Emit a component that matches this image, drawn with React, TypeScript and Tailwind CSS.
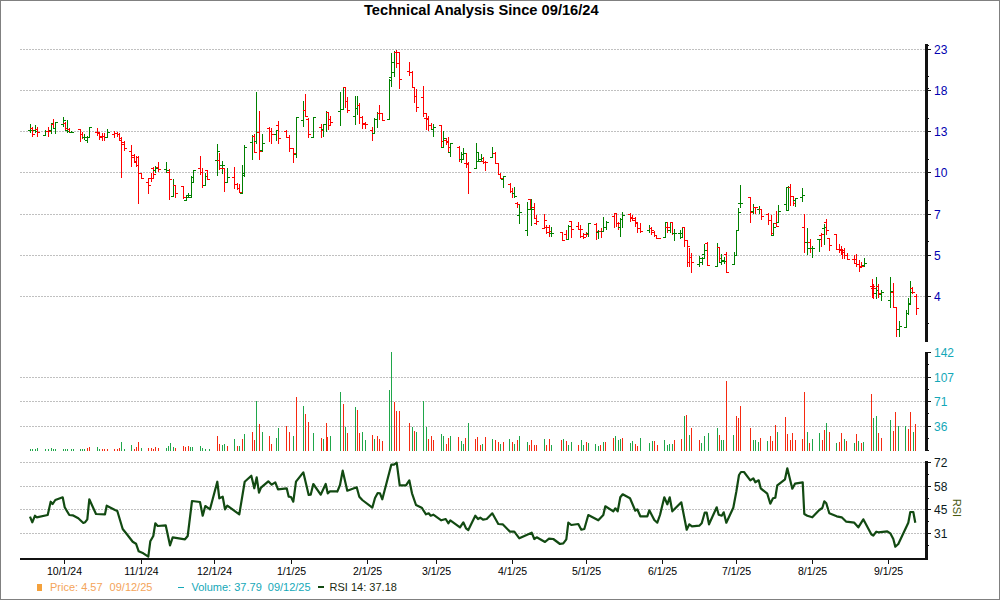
// Bar, volume and RSI values were read off the chart, in 3x crop coordinates
const OHLC: [number, number, string][] = [
  [0, 0, `g 91 373 398 391 391;r 97 380 410 385 403;g 106 376 400 391 392;r 110 382 410 387 397;g 136 390 408 404 392;r 143 382 410 392 392;g 152 370 403 390 370;r 158 358 388 372 385;g 166 365 403 385 367;g 188 350 380 373 360;r 195 365 392 370 385;g 202 360 398 390 392;r 206 385 400 388 397;g 213 393 400 397 397;r 239 388 425 388 402;r 246 395 418 402 412;g 253 403 420 412 412;g 262 407 430 420 410;g 268 382 412 410 382;r 290 385 408 396 398;r 298 396 420 396 410;r 305 398 422 408 408;r 312 400 422 408 412;g 320 388 412 410 396;r 343 392 415 402 400;r 350 395 412 400 403;r 357 400 422 402 420;r 364 412 533 415 425;r 371 422 452 432 445;r 394 436 500 453 465;r 401 462 490 470 485;r 409 468 500 484 470;r 415 468 611 495 520;r 424 518 538 518 533;r 445 535 582 545 555;r 452 518 545 533 533;r 459 500 535 503 522;g 466 497 518 510 503;r 475 487 515 500 508;g 497 487 518 508 510;r 508 508 600 515 538;g 520 538 592 587 555;r 526 555 595 555 580;r 548 558 597 558 590;g 558 585 602 600 585;g 564 580 592 590 585;g 572 527 590 590 532;g 578 510 545 545 510;r 601 468 525 505 515;r 607 505 563 515 555;g 615 518 555 555 528;r 622 510 540 510 538;g 652 433 528 480 453;r 658 460 510 480 505;g 666 483 523 495 495;r 673 505 575 505 547;g 681 505 547 545 532;r 703 502 567 530 552;r 710 550 570 552 565;r 717 552 580 565 575;g 725 495 580 578 518;g 733 435 530 525 441;g 755 405 480 425 408;r 763 403 460 408 455;g 769 277 432 422 397;r 777 332 480 397 453;g 785 403 455 450 430;r 806 382 425 385 392;r 813 385 432 392 402;g 828 390 422 402 390;r 835 362 433 375 415;r 859 390 415 392 410;r 866 405 455 410 445;r 880 445 488 445 460;g 888 350 473 462 350;g 910 302 382 360 330;r 916 283 347 330 347;r 925 355 413 358 403;g 940 352 413 410 352;r 962 372 413 380 390;g 969 372 410 388 372;g 977 332 395 372 337;r 985 337 390 337 375;r 991 347 377 358 367`],
  [330, 30, `g 31 187 287 243 238;g 38 170 240 238 172;r 45 172 233 172 214;r 52 200 250 214 240;g 76 197 285 258 235;g 82 197 255 235 225;r 88 220 283 225 262;r 97 258 297 262 283;r 104 275 297 280 283;r 127 292 332 300 310;g 133 265 312 310 268;g 142 245 293 268 248;r 148 225 270 248 250;r 157 248 272 250 271;g 178 148 268 266 150;g 184 70 172 140 97;g 192 62 140 125 65;r 199 60 115 65 100;r 207 67 177 67 148;r 238 97 137 122 125;r 245 123 172 125 172;r 252 172 218 172 197;r 259 178 245 197 232;r 280 168 260 202 250;r 287 250 300 265 265;r 295 258 302 268 285;r 303 280 300 285 298;g 310 283 320 297 292;r 334 285 352 285 332;g 340 302 352 350 323;r 347 323 345 330 332;r 355 322 370 335 352;g 361 340 382 365 340;r 386 348 395 352 388;g 392 365 398 388 373;g 400 355 390 388 370;r 407 370 413 400 400;r 415 397 491 402 425;g 437 340 413 413 365;g 444 365 397 392 388;g 452 372 397 392 385;r 459 380 403 393 397;r 466 392 423 397 397;g 487 352 382 382 368;r 495 365 403 368 400;r 503 398 435 400 432;r 511 430 447 432 445;g 518 438 475 447 438;r 539 460 490 462 483;r 546 475 505 483 490;g 553 472 505 490 497;r 560 515 535 520 522;g 568 525 582 555 547;g 592 517 617 600 538;r 599 507 540 508 538;g 604 508 587 538 538;r 611 520 565 530 565;r 618 555 585 578 573;r 642 553 597 595 570;r 649 585 612 590 607;r 657 585 622 590 602;g 664 590 620 610 610;r 695 605 630 605 630;r 708 600 630 613 628;g 715 585 630 628 587;r 722 572 625 572 598;r 744 575 600 587 598;r 751 585 625 598 598;r 760 610 628 618 622;r 767 605 622 612 612;g 775 578 622 610 580;r 797 580 630 582 602;g 805 600 628 607 602;r 812 595 625 602 602;g 820 562 605 602 590;g 827 573 600 590 575;r 851 548 595 558 550;r 857 550 592 550 580;r 863 575 600 578 578;g 871 563 622 590 567;g 877 545 595 567 555;r 901 548 575 552 560;r 907 555 572 565 565;r 914 562 590 570 575;r 921 575 610 580 595;r 929 578 610 595 604;g 956 585 610 600 593;r 964 590 615 593 600;r 971 603 622 607 615;r 978 615 628 615 623;r 985 623 628 623 625`],
  [660, 150, `g 14 217 262 260 217;r 22 217 250 232 232;g 29 217 248 240 217;r 36 217 255 217 250;g 42 237 272 250 250;g 59 240 267 250 248;g 67 230 265 262 230;r 72 230 290 230 270;r 80 270 350 270 287;r 88 295 350 337 322;r 94 310 368 322 337;g 118 317 350 343 325;g 125 322 345 335 325;g 133 283 325 313 300;r 141 275 348 280 345;g 170 280 350 347 290;r 176 290 338 290 325;g 184 312 345 335 330;g 191 320 343 332 332;r 198 305 368 313 367;g 222 305 345 342 315;g 229 240 318 315 240;g 235 173 242 240 187;g 241 105 173 160 160;r 270 142 220 142 185;g 280 163 193 183 172;r 286 170 192 172 172;g 296 168 193 178 178;r 303 178 210 178 198;r 325 190 225 192 210;r 332 195 255 210 250;g 339 220 257 255 232;r 347 182 228 218 228;g 353 165 218 215 183;g 378 110 180 162 110;g 384 107 182 180 110;r 391 103 168 110 137;r 398 137 168 137 160;g 406 143 172 150 143;g 427 115 155 140 135;r 433 193 308 230 277;g 442 235 315 277 293;r 449 268 308 277 295;g 457 287 323 293 295;g 478 267 305 268 267;r 484 250 290 254 252;g 491 222 285 235 230;r 498 208 255 215 240;r 507 265 303 265 285;r 527 253 300 253 297;r 536 283 308 298 298;r 542 287 315 298 300;r 546 298 328 300 305;r 553 295 328 305 315;r 560 310 328 315 328;r 582 315 340 327 327;r 589 313 350 340 343;r 597 330 365 343 350;r 604 335 355 347 347;g 611 325 350 345 338;r 635 388 443 408 408;r 640 403 447 415 415;g 649 380 448 430 420;r 654 403 443 407 430;g 663 420 452 432 425;g 691 382 475 450 422;r 699 400 475 425 472;r 707 470 560 472 537;g 717 513 562 537 527;g 737 480 532 532 490;g 743 445 495 490 460;g 751 392 465 462 427;r 757 412 432 415 425;r 767 432 495 438 475`],
];

const VOLUME: [number, number, string][] = [
  [0, 400, `g 91 147;g 97 147;g 106 146;g 112 143;g 136 147;g 143 146;g 152 144;g 158 146;g 166 146;g 188 146;g 195 148;g 202 147;g 213 147;g 218 148;g 239 147;g 246 148;g 253 146;r 262 143;r 268 141;g 290 142;g 298 147;r 305 147;r 312 147;r 320 147;r 343 147;r 350 147;r 357 144;g 364 126;g 371 148;g 394 136;r 401 147;r 407 140;r 415 127;g 424 143;r 445 144;r 452 143;r 459 147;r 466 142;r 475 143;g 497 143;g 504 137;g 511 129;g 518 141;r 526 144;r 548 139;r 556 140;r 563 138;g 570 141;g 577 142;g 601 139;g 607 143;g 615 146;g 628 146;r 652 108;r 658 133;g 666 135;g 673 132;r 681 138;g 703 118;r 710 139;g 717 138;r 725 118;g 733 103;r 755 97;r 763 120;g 769 3;r 777 73;g 785 97;r 806 108;r 813 132;g 828 115;g 835 85;r 859 79;r 866 97;g 880 108;r 888 -9;g 910 18;r 916 43;r 925 66;g 940 100;r 962 115;g 969 118;r 977 70;r 982 112;g 991 108`],
  [330, 340, `g 31 157;r 38 192;g 45 262;r 52 280;g 76 202;r 82 211;r 88 280;g 97 277;g 104 300;r 127 285;g 133 298;r 142 288;r 148 297;r 157 303;g 178 150;g 184 37;r 192 187;r 199 214;r 207 214;r 238 249;g 245 262;r 252 273;g 259 276;g 280 184;g 289 262;r 295 298;r 304 289;r 310 300;g 334 282;g 340 289;r 347 312;r 355 295;g 361 288;r 385 292;g 392 304;g 400 312;r 406 295;g 415 249;r 436 298;r 442 292;r 451 316;g 457 313;r 466 292;g 487 298;r 496 301;r 503 306;g 511 313;r 518 306;g 538 298;r 547 306;g 553 313;r 562 301;g 568 289;g 592 306;r 598 316;r 604 301;r 613 316;r 619 316;g 643 298;r 649 316;r 658 298;g 664 316;r 693 301;g 700 298;r 709 304;g 715 316;g 724 306;r 745 316;g 754 301;g 760 316;r 769 306;g 775 310;g 796 313;g 805 318;r 811 316;g 820 306;r 826 306;r 850 295;g 856 289;g 865 301;g 871 298;r 877 295;g 901 310;g 907 304;r 916 313;r 922 318;g 931 295;g 958 310;g 967 304;r 973 304;r 982 316;g 1003 301;r 1012 316`],
  [660, 340, `g 22 316;g 28 313;g 37 313;r 43 301;r 64 298;g 73 228;r 79 225;g 88 286;r 94 265;r 118 301;g 124 310;g 133 289;g 145 280;g 170 265;r 176 286;g 184 301;g 190 301;r 199 124;g 220 286;r 229 228;r 235 234;r 241 199;r 271 265;g 280 301;g 286 301;g 295 306;r 301 295;g 322 304;r 331 289;r 337 304;r 346 255;g 352 277;r 376 231;r 382 283;r 391 301;r 397 280;r 406 301;r 427 298;r 433 157;g 442 277;r 448 310;g 457 298;g 478 280;r 487 301;r 493 271;g 499 249;r 508 277;g 529 310;r 538 306;r 544 280;g 553 298;r 559 304;g 583 310;r 589 283;g 595 304;r 604 310;g 610 306;r 634 163;g 640 234;g 649 228;r 655 280;r 664 295;g 691 240;r 700 274;r 706 216;g 715 259;g 736 259;r 745 268;r 751 216;g 760 277;r 766 252`],
];

const RSI: [number, number, number[][]][] = [
  [0, 400, [[90,350],[97,367],[105,347],[110,352],[143,345],[152,305],[158,312],[166,300],[188,292],[194,322],[208,345],[218,346],[235,355],[250,369],[255,367],[262,358],[268,298],[288,342],[315,343],[320,317],[345,330],[352,333],[368,387],[380,402],[398,425],[408,431],[416,454],[430,460],[445,470],[451,424],[460,408],[466,370],[473,378],[497,376],[510,436],[518,412],[555,418],[563,408],[576,303],[600,306],[608,347],[616,318],[626,325],[630,328],[652,245],[658,295],[668,290],[675,328],[682,317],[718,343],[734,245],[754,227],[763,265],[770,232],[777,278],[783,263],[805,244],[815,254],[826,247],[834,268],[860,265],[866,290],[873,291],[880,305],[888,245],[910,217],[926,285],[932,284],[940,252],[962,284],[977,252],[983,280],[990,274],[1012,274]]],
  [330, 340, [[22,455],[30,435],[38,392],[52,452],[80,442],[88,470],[97,480],[127,503],[135,474],[143,459],[150,460],[157,478],[184,374],[192,374],[200,368],[209,436],[228,436],[238,421],[246,460],[258,495],[275,503],[288,523],[296,520],[302,527],[310,524],[334,541],[347,537],[355,550],[361,541],[390,562],[400,547],[408,565],[415,570],[436,527],[444,537],[451,533],[459,539],[470,537],[487,520],[505,552],[518,553],[540,575],[553,575],[568,595],[605,578],[613,597],[620,592],[645,606],[657,596],[670,597],[690,612],[700,610],[709,598],[715,548],[724,555],[745,552],[754,569],[763,567],[775,525],[805,541],[820,525],[826,499],[850,514],[856,505],[863,514],[871,472],[878,463],[900,475],[916,512],[922,508],[931,529],[952,529],[958,511],[973,540],[982,548]]],
  [660, 340, [[0,525],[13,472],[22,493],[29,472],[37,514],[64,487],[80,569],[88,553],[96,559],[118,557],[125,550],[134,518],[140,518],[147,553],[170,502],[176,524],[185,527],[191,517],[199,548],[220,503],[229,455],[237,405],[243,396],[252,396],[271,421],[280,415],[286,427],[296,421],[302,445],[322,461],[331,491],[339,475],[346,473],[352,436],[375,418],[382,385],[397,446],[405,431],[428,427],[433,522],[442,527],[457,532],[478,510],[487,504],[493,484],[499,490],[508,520],[530,529],[545,532],[559,545],[583,548],[595,562],[610,538],[634,583],[640,587],[649,575],[655,577],[682,574],[691,580],[700,597],[706,620],[715,612],[745,548],[751,516],[760,516],[766,548]]],
];

const px = (n: number) => Math.round(n) + 0.5;

const bars = OHLC.flatMap(([ox, oy, raw]) =>
  raw.split(";").map((row) => {
    const [c, ...n] = row.split(" ");
    const [x, top, bottom, open, close] = n.map(Number);
    return {
      green: c === "g",
      x: px(ox + x / 3),
      top: Math.round(oy + top / 3),
      bottom: Math.round(oy + bottom / 3),
      open: px(oy + open / 3),
      close: px(oy + close / 3),
    };
  }),
);

const volume = VOLUME.flatMap(([ox, oy, raw]) =>
  raw.split(";").map((row) => {
    const [c, x, top] = row.split(" ");
    return { green: c === "g", x: px(ox + Number(x) / 3), top: Math.round(oy + Number(top) / 3) };
  }),
);

const rsiPoints = RSI.flatMap(([ox, oy, pts]) =>
  pts.map(([x, y]) => `${(ox + x / 3).toFixed(1)},${(oy + y / 3).toFixed(1)}`),
).join(" ");

const priceLabels = [
  ["23", 49],
  ["18", 90],
  ["13", 131],
  ["10", 172],
  ["7", 214],
  ["5", 255],
  ["4", 296],
] as const;
const priceMinor = [45, 76, 88, 118, 159, 200, 241, 323];
const volumeLabels = [
  ["142", 352],
  ["107", 377],
  ["71", 401],
  ["36", 426],
] as const;
const volumeMinor = [364, 389, 413, 438, 450];
const rsiLabels = [
  ["72", 462],
  ["58", 486],
  ["45", 509],
  ["31", 533],
] as const;
const rsiMinor = [474, 498, 521, 545];
const months = [
  ["10/1/24", 64],
  ["11/1/24", 141],
  ["12/1/24", 214],
  ["1/1/25", 291],
  ["2/1/25", 367],
  ["3/1/25", 436],
  ["4/1/25", 512],
  ["5/1/25", 586],
  ["6/1/25", 662],
  ["7/1/25", 736],
  ["8/1/25", 812],
  ["9/1/25", 888],
] as const;

function Chart() {
  return (
    <svg width={998} height={560} viewBox="1 18 998 560" className="block">
      <g stroke="#c0c0c0" strokeDasharray="2 1" shapeRendering="crispEdges">
        {[...priceLabels, ...volumeLabels.slice(1), ...rsiLabels].map(([l, y]) => (
          <line key={`${l}-${y}`} x1={20} x2={925} y1={y + 0.5} y2={y + 0.5} />
        ))}
      </g>

      <g shapeRendering="crispEdges" fill="none">
        {bars.map((b, i) => (
          <path
            key={i}
            stroke={b.green ? "#008000" : "#ff0000"}
            d={`M${b.x} ${b.top}V${b.bottom}M${b.x - 2.5} ${b.open}H${b.x + 0.5}M${b.x - 0.5} ${b.close}H${b.x + 2.5}`}
          />
        ))}
        {volume.map((v, i) => (
          <line key={i} x1={v.x} x2={v.x} y1={v.top} y2={451} stroke={v.green ? "#1fa64a" : "#f52a10"} />
        ))}
      </g>

      <polyline points={rsiPoints} fill="none" stroke="#124a12" strokeWidth={2.2} strokeLinejoin="round" />

      <g stroke="#111" shapeRendering="crispEdges">
        <line x1={926} x2={926} y1={44} y2={342} strokeWidth={3} />
        <line x1={926} x2={926} y1={352} y2={451} strokeWidth={3} />
        <line x1={926} x2={926} y1={461} y2={560} strokeWidth={3} />
        <line x1={20} x2={927} y1={559} y2={559} strokeWidth={2} />
        {[...priceLabels, ...volumeLabels, ...rsiLabels].map(([l, y]) => (
          <line key={`${l}-${y}`} x1={927} x2={931} y1={y + 0.5} y2={y + 0.5} />
        ))}
        {[...priceMinor, ...volumeMinor, ...rsiMinor].map((y) => (
          <line key={y} x1={927} x2={929} y1={y + 0.5} y2={y + 0.5} />
        ))}
        {months.map(([l, x]) => (
          <line key={l} x1={x + 0.5} x2={x + 0.5} y1={560} y2={564} />
        ))}
      </g>

      <g fontSize={12} dominantBaseline="central">
        {priceLabels.map(([l, y]) => (
          <text key={l} x={934} y={y + 0.5} fill="#0000b0">
            {l}
          </text>
        ))}
        {volumeLabels.map(([l, y]) => (
          <text key={l} x={934} y={y + 0.5} fill="#14a8b8">
            {l}
          </text>
        ))}
        {rsiLabels.map(([l, y]) => (
          <text key={l} x={934} y={y + 0.5} fill="#0a1a20">
            {l}
          </text>
        ))}
      </g>
      <text
        x={957}
        y={508}
        fontSize={11}
        fill="#4a5a10"
        textAnchor="middle"
        dominantBaseline="central"
        transform="rotate(90 957 508)"
      >
        RSI
      </text>

      <g fontSize={10.5} textAnchor="middle" fill="#000" dominantBaseline="central">
        {months.map(([l, x]) => (
          <text key={l} x={x + 0.5} y={571}>
            {l}
          </text>
        ))}
      </g>
    </svg>
  );
}

function Legend() {
  return (
    <div className="flex h-[20px] items-center whitespace-pre pb-[2px] pl-[36px] text-[11px]">
      <span className="h-[7px] w-[5px] bg-[#f4a13c]" />
      <span className="ml-[8px] text-[#f4a45a]">Price: 4.57</span>
      <span className="ml-[7px] text-[#f4a45a]">09/12/25</span>
      <span className="ml-[26px] h-px w-[6px] bg-[#14a8b8]" />
      <span className="ml-[7px] text-[#14a8b8]">Volume: 37.79</span>
      <span className="ml-[6px] text-[#14a8b8]">09/12/25</span>
      <span className="ml-[7px] h-[2px] w-[6px] bg-[#124a12]" />
      <span className="ml-[6px] text-[#1a2a10]">RSI 14: 37.18</span>
    </div>
  );
}

export default function App() {
  return (
    <div className="h-[600px] w-[1000px] overflow-hidden border border-[#808080] bg-white font-['Liberation_Sans',Arial,sans-serif]">
      <div className="h-[17px] pl-[363px] text-[14.67px] font-bold leading-[18px] text-black">
        Technical Analysis Since 09/16/24
      </div>
      <Chart />
      <Legend />
    </div>
  );
}
